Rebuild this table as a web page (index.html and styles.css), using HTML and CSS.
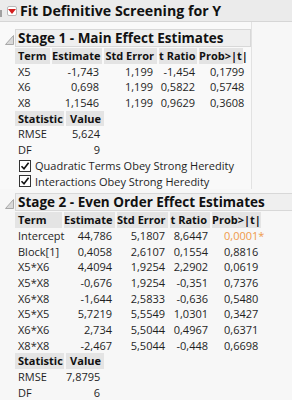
FILE: index.html
```html
<!DOCTYPE html>
<html>
<head>
<meta charset="utf-8">
<link rel="stylesheet" href="styles.css">
</head>
<body>
<div class="report">
  <div class="titlebar">
    <span class="edge"></span>
    <span class="redbtn"><svg width="8" height="5" viewBox="0 0 8 5"><polygon points="0,0 8,0 4,5" fill="#d42020"/></svg></span>
    <span class="title">Fit Definitive Screening for Y</span>
  </div>

  <div class="section s1">
    <div class="sechead">
      <svg class="distri" width="9" height="10" viewBox="0 0 9 10"><polygon points="8.5,0.5 8.5,9.5 0.5,9.5" fill="#d9d9d9" stroke="#a8a8a8" stroke-width="1"/></svg>
      <div class="secbox">Stage 1 - Main Effect Estimates</div>
    </div>
    <div class="body">
      <div class="grid g1">
        <div class="h l">Term</div><div class="h">Estimate</div><div class="h">Std Error</div><div class="h">t Ratio</div><div class="h">Prob&gt;|t|</div>
        <div class="l">X5</div><div class="n">-1,743</div><div class="n se">1,199</div><div class="n tr">-1,454</div><div class="p">0,1799</div>
        <div class="l">X6</div><div class="n">0,698</div><div class="n se">1,199</div><div class="n tr">0,5822</div><div class="p">0,5748</div>
        <div class="l">X8</div><div class="n">1,1546</div><div class="n se">1,199</div><div class="n tr">0,9629</div><div class="p">0,3608</div>
      </div>
      <div class="grid stat">
        <div class="h l">Statistic</div><div class="h">Value</div>
        <div class="l">RMSE</div><div class="n">5,624</div>
        <div class="l">DF</div><div class="n">9</div>
      </div>
      <div class="chk"><span class="box"><svg width="10" height="10" viewBox="0 0 10 10"><path d="M1.5 5.2 L4 7.8 L8.6 1.8" fill="none" stroke="#111" stroke-width="1.6"/></svg></span>Quadratic Terms Obey Strong Heredity</div>
      <div class="chk"><span class="box"><svg width="10" height="10" viewBox="0 0 10 10"><path d="M1.5 5.2 L4 7.8 L8.6 1.8" fill="none" stroke="#111" stroke-width="1.6"/></svg></span>Interactions Obey Strong Heredity</div>
    </div>
  </div>

  <div class="section s2">
    <div class="sechead">
      <svg class="distri" width="9" height="10" viewBox="0 0 9 10"><polygon points="8.5,0.5 8.5,9.5 0.5,9.5" fill="#d9d9d9" stroke="#a8a8a8" stroke-width="1"/></svg>
      <div class="secbox wide">Stage 2 - Even Order Effect Estimates</div>
    </div>
    <div class="body">
      <div class="grid g2">
        <div class="h l">Term</div><div class="h">Estimate</div><div class="h">Std Error</div><div class="h">t Ratio</div><div class="h">Prob&gt;|t|</div>
        <div class="l">Intercept</div><div class="n">44,786</div><div class="n">5,1807</div><div class="n tr">8,6447</div><div class="p sig">0,0001*</div>
        <div class="l">Block[1]</div><div class="n">0,4058</div><div class="n">2,6107</div><div class="n tr">0,1554</div><div class="p">0,8816</div>
        <div class="l">X5*X6</div><div class="n">4,4094</div><div class="n">1,9254</div><div class="n tr">2,2902</div><div class="p">0,0619</div>
        <div class="l">X5*X8</div><div class="n">-0,676</div><div class="n">1,9254</div><div class="n tr">-0,351</div><div class="p">0,7376</div>
        <div class="l">X6*X8</div><div class="n">-1,644</div><div class="n">2,5833</div><div class="n tr">-0,636</div><div class="p">0,5480</div>
        <div class="l">X5*X5</div><div class="n">5,7219</div><div class="n">5,5549</div><div class="n tr">1,0301</div><div class="p">0,3427</div>
        <div class="l">X6*X6</div><div class="n">2,734</div><div class="n">5,5044</div><div class="n tr">0,4967</div><div class="p">0,6371</div>
        <div class="l">X8*X8</div><div class="n">-2,467</div><div class="n">5,5044</div><div class="n tr">-0,448</div><div class="p">0,6698</div>
      </div>
      <div class="grid stat">
        <div class="h l">Statistic</div><div class="h">Value</div>
        <div class="l">RMSE</div><div class="n">7,8795</div>
        <div class="l">DF</div><div class="n">6</div>
      </div>
    </div>
  </div>
</div>
</body>
</html>
```

FILE: styles.css
```css
html, body {
  margin: 0;
  padding: 0;
  background: #f7f7f7;
}
body {
  width: 292px;
  height: 400px;
  overflow: hidden;
  font-family: "Open Sans", "Noto Sans", sans-serif;
  font-size: 11px;
  color: #1f1f1f;
}
.report {
  display: flex;
  flex-direction: column;
}
.titlebar {
  height: 22px;
  background: #ebebeb;
  border-bottom: 1px solid #d6d6d6;
  display: flex;
  align-items: center;
  box-sizing: border-box;
  position: relative;
}
.edge {
  position: absolute;
  left: 0;
  top: 10px;
  width: 2px;
  height: 7px;
  background: #a0a0a0;
}
.redbtn {
  margin-left: 7px;
  width: 10px;
  height: 10px;
  box-sizing: border-box;
  border: 1px solid #b9b9b9;
  border-radius: 2px;
  background: #fff;
  display: flex;
  align-items: center;
  justify-content: center;
  margin-top: 1px;
}
.title {
  margin-left: 3px;
  font-weight: 700;
  font-size: 14.2px;
  line-height: 18px;
  color: #111;
}
.section {
  display: flex;
  flex-direction: column;
}
.s1 {
  width: 251px;
  border-right: 1px solid #e2e2e2;
  padding-top: 7px;
  background: #f9f9f9;
}
.s2 {
  padding-top: 4px;
}
.sechead {
  display: flex;
  align-items: flex-end;
  height: 18px;
}
.distri {
  margin-left: 5px;
  margin-right: 1px;
  margin-bottom: 2px;
}
.secbox {
  flex: 1;
  height: 18px;
  box-sizing: border-box;
  border: 1px solid #d8d8d8;
  background: #efefef;
  font-weight: 700;
  font-size: 13.5px;
  line-height: 16px;
  padding-left: 2px;
  color: #111;
  white-space: nowrap;
}
.secbox.wide {
  border-right: none;
}
.body {
  padding-left: 15px;
  padding-top: 1px;
  display: flex;
  flex-direction: column;
}
.grid {
  display: grid;
  grid-auto-rows: 15.7px;
  column-gap: 2px;
  line-height: 15.7px;
  white-space: nowrap;
}
.g1 {
  grid-template-columns: 35px 50px 53px 38px 44px;
}
.g2 {
  grid-template-columns: 47px 51px 51px 40px 49px;
}
.stat {
  grid-template-columns: 49px 38px;
}
.grid > div {
  text-align: right;
  padding-right: 3px;
}
.grid > .h {
  background: #e4e4e4;
  font-weight: 700;
  color: #111;
}
.grid > .l {
  text-align: left;
  padding-left: 3px;
  padding-right: 0;
}
.grid > .se {
  padding-right: 4px;
}
.grid > .tr {
  padding-right: 2px;
}
.g1 > .p {
  text-align: left;
  padding-left: 11px;
}
.g2 > .p {
  text-align: left;
  padding-left: 12px;
}
.stat > .n {
  padding-right: 4px;
}
.sig {
  color: #ef9a4a;
}
.chk {
  height: 15.7px;
  display: flex;
  align-items: center;
  padding-left: 4px;
  white-space: nowrap;
  line-height: 15.7px;
}
.box {
  width: 12px;
  height: 12px;
  box-sizing: border-box;
  border: 1px solid #333;
  background: #fff;
  display: flex;
  align-items: center;
  justify-content: center;
  margin-right: 4px;
}
```
